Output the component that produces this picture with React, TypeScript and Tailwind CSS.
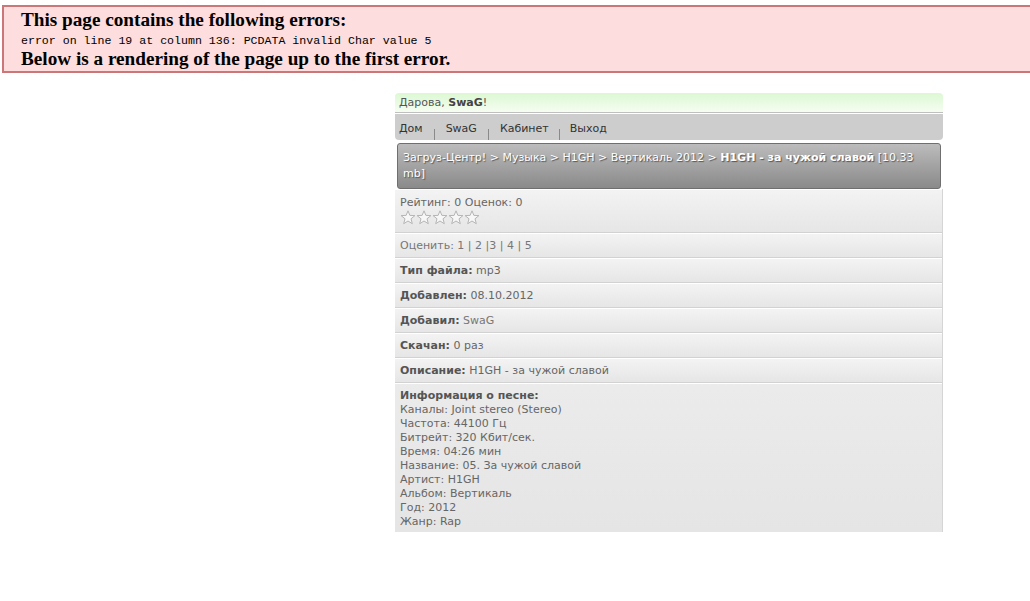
import React from "react";

const font = { fontFamily: '"DejaVu Sans", Verdana, sans-serif' };

function Star() {
  return (
    <svg width="16" height="15" viewBox="0 0 16 15" className="block">
      <path
        d="M8 0.8 L9.9 5.4 L14.9 5.6 L11 8.8 L12.3 13.7 L8 11 L3.7 13.7 L5 8.8 L1.1 5.6 L6.1 5.4 Z"
        fill="#f7f7f7"
        stroke="#b5b5b5"
        strokeWidth="1"
        strokeLinejoin="round"
      />
    </svg>
  );
}

function Row({ children, className = "" }: { children: React.ReactNode; className?: string }) {
  return (
    <div
      className={
        "border-t border-white border-b border-b-[#d2d2d2] bg-gradient-to-b from-[#f3f3f3] to-[#e6e6e6] px-[5px] " +
        className
      }
    >
      {children}
    </div>
  );
}

function Label({ children }: { children: React.ReactNode }) {
  return <b className="font-bold text-[#555]">{children}</b>;
}

export default function App() {
  return (
    <div className="w-full min-h-[601px] bg-white overflow-hidden">
      <div className="pt-[5px] pl-[2px]">
        <div className="w-[1060px] border-2 border-[#cc7777] bg-[#fddddd] pl-[17px] pr-4 pt-[2px] pb-[2px] text-black">
          <h3
            className="text-[19.2px] font-bold leading-[22px]"
            style={{ fontFamily: '"Liberation Serif", serif' }}
          >
            This page contains the following errors:
          </h3>
          <div
            className="mt-[2px] text-[11.6px] leading-[16px]"
            style={{ fontFamily: '"Liberation Mono", monospace' }}
          >
            error on line 19 at column 136: PCDATA invalid Char value 5
          </div>
          <h3
            className="text-[19.2px] font-bold leading-[20px]"
            style={{ fontFamily: '"Liberation Serif", serif' }}
          >
            Below is a rendering of the page up to the first error.
          </h3>
        </div>
      </div>

      <div className="ml-[395px] mt-[20px] w-[548px] text-[11px] text-[#666]" style={font}>
        <div className="h-[20px] rounded-t-[4px] border-b border-[#bfbfbf] bg-gradient-to-b from-[#dcf8d2] to-[#f6fdf3] pl-[4px] leading-[20px] text-[#555]">
          Дарова, <b className="text-[#444]">SwaG</b>!
        </div>
        <div className="mt-[1px] flex h-[26px] items-stretch rounded-b-[4px] bg-[#cdcdcd] pl-[4px] text-[#333]">
          <span className="leading-[30px]">Дом</span>
          <span className="mx-[11px] mt-[15px] w-px bg-[#8a8a8a]" />
          <span className="leading-[30px]">SwaG</span>
          <span className="mx-[11px] mt-[15px] w-px bg-[#8a8a8a]" />
          <span className="leading-[30px]">Кабинет</span>
          <span className="mx-[10px] mt-[15px] w-px bg-[#8a8a8a]" />
          <span className="leading-[30px]">Выход</span>
        </div>

        <div className="mx-[2px] mt-[3px] rounded-[3px] border border-[#6f6f6f] bg-gradient-to-b from-[#bcbcbc] to-[#8a8a8a] px-[5px] py-[6px] leading-[16px] text-white [text-shadow:1px_1px_1px_#555]">
          Загруз-Центр! &gt; Музыка &gt; H1GH &gt; Вертикаль 2012 &gt; <b>H1GH - за чужой славой</b> [10.33 mb]
        </div>

        <div className="border-r border-[#d5d5d5]">
          <Row className="pt-[6px] pb-[7px]">
            <div className="leading-[14px]">Рейтинг: 0 Оценок: 0</div>
            <div className="flex">
              <Star />
              <Star />
              <Star />
              <Star />
              <Star />
            </div>
          </Row>
          <Row className="py-[4px] leading-[15px]">
            <span className="text-[#777]">Оценить: 1 | 2 |3 | 4 | 5</span>
          </Row>
          <Row className="py-[4px] leading-[15px]">
            <Label>Тип файла:</Label> mp3
          </Row>
          <Row className="py-[4px] leading-[15px]">
            <Label>Добавлен:</Label> 08.10.2012
          </Row>
          <Row className="py-[4px] leading-[15px]">
            <Label>Добавил:</Label> <span className="text-[#777]">SwaG</span>
          </Row>
          <Row className="py-[4px] leading-[15px]">
            <Label>Скачан:</Label> 0 раз
          </Row>
          <Row className="py-[4px] leading-[15px]">
            <Label>Описание:</Label> H1GH - за чужой славой
          </Row>
          <div className="border-t border-white bg-gradient-to-b from-[#ebebeb] to-[#e5e5e5] px-[5px] pt-[5px] pb-[3px] leading-[14px]">
            <Label>Информация о песне:</Label>
            <div>Каналы: Joint stereo (Stereo)</div>
            <div>Частота: 44100 Гц</div>
            <div>Битрейт: 320 Кбит/сек.</div>
            <div>Время: 04:26 мин</div>
            <div>Название: 05. За чужой славой</div>
            <div>Артист: H1GH</div>
            <div>Альбом: Вертикаль</div>
            <div>Год: 2012</div>
            <div>Жанр: Rap</div>
          </div>
        </div>
      </div>
    </div>
  );
}
